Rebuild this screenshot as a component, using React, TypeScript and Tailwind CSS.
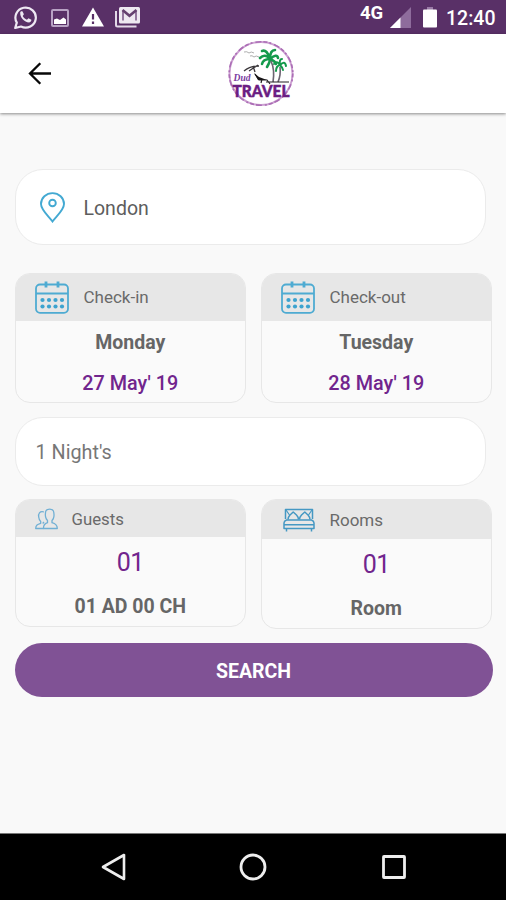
import React from "react";

function WhatsAppIcon() {
  return (
    <svg className="h-[26px] w-[25px]" viewBox="0 0 25 26" fill="none">
      <path d="M2.200 23 3.800 17.600A10.200 10 0 1 1 8 21.500Z" stroke="#eee8f3" strokeWidth="2.200" strokeLinejoin="round" />
      <path d="M7.200 7.400C7.500 6.400 8.300 6.100 9.400 6.300L10.900 9.200 9.700 11C10.700 12.800 12 14 13.900 14.800L15.500 13.300 18.400 14.700C18.400 16.200 17.600 17.100 16.200 17.400 11.500 17.500 6.700 12.300 7.200 7.400Z" fill="#eee8f3" />
    </svg>
  );
}

function PictureIcon() {
  return (
    <svg className="h-[18px] w-[18px]" viewBox="0 0 18 18" fill="none">
      <rect x="1" y="1" width="16" height="16" rx="1" stroke="#b8a2c4" strokeWidth="2" />
      <path d="M3 15V10.500L6 9.500 9 11 12.500 8.500 15 10.500V15Z" fill="#fff" />
    </svg>
  );
}

function WarningIcon() {
  return (
    <svg className="h-[20px] w-[22px]" viewBox="0 0 22 20">
      <path d="M11 0.500 22 19.500H0Z" fill="#fff" />
      <path d="M11 7V12.600M11 14.600V17" stroke="#593067" strokeWidth="2.200" />
    </svg>
  );
}

function MailIcon() {
  return (
    <svg className="h-[21px] w-[26px]" viewBox="0 0 26 21" fill="none">
      <path d="M1 4V18Q1 19.500 2.500 19.500H21.500" stroke="#e3d9e8" strokeWidth="2" />
      <rect x="4" y="0" width="21" height="16.500" rx="1.500" fill="#eee9f1" />
      <path d="M8 13.500V4M21 4V13.500" stroke="#8a6c96" strokeWidth="1.800" />
      <path d="M7.500 3 14.500 8.800 21.500 3" stroke="#65416f" strokeWidth="2.600" />
    </svg>
  );
}

function SignalIcon() {
  return (
    <svg className="h-[21px] w-[22px]" viewBox="0 0 22 21">
      <path d="M0 21 21 0V21Z" fill="#8e6c9c" />
      <path d="M0 21 10.500 10.500V21Z" fill="#fff" />
    </svg>
  );
}

function BatteryIcon() {
  return (
    <svg className="h-[21px] w-[14px]" viewBox="0 0 14 21">
      <rect x="4" y="0" width="6" height="3" fill="#9a7aa6" />
      <rect x="0" y="2.500" width="14" height="18" rx="1" fill="#fff" />
    </svg>
  );
}

function BackArrow() {
  return (
    <svg className="h-[23px] w-[24px]" viewBox="0 0 24 23" fill="none" stroke="#080808" strokeWidth="2.300">
      <path d="M23 11.500H2M12.300 1.200 2 11.500 12.300 21.800" />
    </svg>
  );
}

function Logo() {
  return (
    <svg className="h-[70px] w-[74px]" viewBox="0 0 74 70" fill="none">
      <circle cx="37" cy="34.500" r="31.500" stroke="#cda2d2" strokeWidth="2" />
      <circle cx="37" cy="34.500" r="31.800" stroke="#ab6db5" strokeWidth="1.600" strokeDasharray="4 2 2 3 6 2" />
      <path d="M20 13Q23 12 25 14Q27 12 30 14M26 17Q28 16 30 18Q32 16 35 18" stroke="#a5a5a5" strokeWidth="0.900" />
      <g stroke="#149a4b" strokeWidth="2.600" strokeLinecap="round">
        <path d="M46 20Q41 14 36 19M46 20Q43 10 38 12M46 20Q46 11 51 11M46 20Q53 14 54 19M46 20Q39 20 38 25M46 20Q46 23 43 28M46 20Q51 22 52 25" />
        <path d="M56 26Q53 21 50 25M56 26Q55 20 58 20M56 26Q61 21 62 27M56 26Q52 27 52 32M56 26Q59 29 59 31" strokeWidth="2" />
      </g>
      <path d="M47 22Q51 31 49 43M56 28Q57 36 54 43" stroke="#6b6370" strokeWidth="1.600" />
      <path d="M20 32Q26 27 35 27M25 32 34 26M29 27 31 33" stroke="#3a363a" strokeWidth="1.300" />
      <path d="M31 35 35 41 43 41 46 45M38 40 37 44M42 43H65" stroke="#242124" strokeWidth="1.200" />
      <path d="M30 34 34 41 43 41 35 38Z" fill="#171517" />
      <text x="9.500" y="42" fontFamily="Liberation Serif, serif" fontSize="10" fontStyle="italic" fontWeight="bold" textLength="17" lengthAdjust="spacingAndGlyphs" fill="#7a3ba0">Dud</text>
      <text x="8.500" y="58" fontFamily="Lato, sans-serif" fontSize="17" fontWeight="900" textLength="57" lengthAdjust="spacingAndGlyphs" fill="#6b1d82" stroke="#6b1d82" strokeWidth="0.500">TRAVEL</text>
    </svg>
  );
}

function PinIcon() {
  return (
    <svg className="h-[31px] w-[26px]" viewBox="0 0 26 31" fill="none" stroke="#43a9d2" strokeWidth="1.900">
      <path d="M12.500 29.500C8.500 24 1 18 1 12A11.500 10.900 0 0 1 24 12C24 18 16.500 24 12.500 29.500Z" />
      <circle cx="12.500" cy="11" r="3.300" />
    </svg>
  );
}

const DOT_COLUMNS = [7.5, 14, 20.5, 27];

function CalendarIcon() {
  return (
    <svg className="h-[33px] w-[34px]" viewBox="0 0 34 33" fill="none" stroke="#4eabd2" strokeWidth="1.800">
      <rect x="1" y="3.500" width="32" height="28.300" rx="4" />
      <path d="M1 12.500H33" />
      <path d="M11 0.500V6.500M23 0.500V6.500" strokeWidth="2.800" />
      {DOT_COLUMNS.map((x) => (
        <g key={x} fill="#3da3cf" stroke="none">
          <circle cx={x} cy="19" r="2.100" />
          <circle cx={x} cy="25.500" r="2.100" />
        </g>
      ))}
    </svg>
  );
}

function GuestsIcon() {
  return (
    <svg className="h-[22px] w-[23px]" viewBox="0 0 23 22" fill="none" stroke="#70afd4" strokeWidth="1.300" strokeLinejoin="round">
      <path d="M8.500 20.500H22.300C22.300 16.500 20 15.600 17 14.700V12.500C19 10.500 19.300 7.300 18.800 4.500 18.300 0 10.900 0 10.500 4.500 10.100 7.300 10.500 10.500 12.500 12.500V14.700C10 15.500 8.300 16.500 8.500 20.500Z" />
      <path d="M9 4C4.500 2.700 3.200 6 3.700 9 3.900 11 4.600 12.500 5.700 13.500V15.300C2.500 16.300 0.700 17 0.700 20.500H8.500M9 14 7.700 15.500" />
    </svg>
  );
}

function BedIcon() {
  return (
    <svg className="h-[24px] w-[32px]" viewBox="0 0 32 24" fill="none" stroke="#4598c3" strokeWidth="1.500" strokeLinejoin="round">
      <path d="M2.500 11V1.500H29.500V11M3.500 12H28.500Q31 13 31 15V20.500H1V15Q1 13 3.500 12ZM1 16.800H31M3.500 20.500V23.500M28.500 20.500V23.500" />
      <path d="M5 11.500Q5 9 7 7L10.200 4 13.500 7Q15.500 9 15.500 11.500M16.500 11.500Q16.500 9 18.500 7L21.800 4 25 7Q27 9 27 11.500" />
      <path d="M3 2 6.500 7M29 2 25.500 7" strokeWidth="1.200" />
    </svg>
  );
}

interface CardProps {
  icon: React.ReactNode;
  title: string;
  titleClass: string;
  frameClass: string;
  headClass: string;
  children: React.ReactNode;
}

function Card({ icon, title, titleClass, frameClass, headClass, children }: CardProps) {
  return (
    <section className={`w-[231.5px] overflow-hidden rounded-[15px] border-[1.5px] border-[#e7e7e7] bg-[#fafafa] ${frameClass}`}>
      <div className={`flex items-center bg-[#e7e7e7] pl-[19px] text-[#6a6a6a] ${headClass}`}>
        {icon}
        <span className={titleClass}>{title}</span>
      </div>
      <div className="flex flex-col items-center">{children}</div>
    </section>
  );
}

export default function App() {
  return (
    <div className="flex h-[900px] w-[506px] flex-col overflow-hidden bg-[#f9f9f9] font-['Roboto',sans-serif]">
      <div className="flex h-[34px] shrink-0 items-start bg-[#593067] text-white">
        <div className="flex pl-[13px] pt-[5px]"><WhatsAppIcon /></div>
        <div className="ml-[13px] mt-[9px]"><PictureIcon /></div>
        <div className="ml-[13px] mt-[7px]"><WarningIcon /></div>
        <div className="ml-[11px] mt-[7px]"><MailIcon /></div>
        <span className="ml-[219px] mt-[3px] w-[26px] whitespace-nowrap text-[18.500px] font-bold leading-5">4G</span>
        <div className="ml-[4px] mt-[7px]"><SignalIcon /></div>
        <div className="ml-[11px] mt-[7px]"><BatteryIcon /></div>
        <span className="ml-[9px] mt-[7px] whitespace-nowrap text-[19.5px] font-medium leading-6">12:40</span>
      </div>
      <header className="z-10 flex h-[79px] shrink-0 items-center bg-white pl-[28px] shadow-[0_1px_3px_rgba(0,0,0,0.45)]">
        <BackArrow />
        <div className="ml-[172px]"><Logo /></div>
      </header>
      <main className="flex flex-1 flex-col pl-[14.5px] pt-[56px]">
        <div className="flex h-[76px] w-[471px] items-center rounded-[28px] border-[1.5px] border-[#ebebeb] bg-white pl-[24px] text-[#5d5d5d]">
          <PinIcon />
          <span className="ml-[18px] mt-[3px] text-[19.5px]">London</span>
        </div>
        <div className="mt-[28px] flex gap-[14.5px]">
          <Card icon={<CalendarIcon />} title="Check-in" titleClass="ml-[15px] mt-px text-[17px]" frameClass="h-[130px]" headClass="h-[47px]">
            <strong className="mt-[8px] text-[19.5px] leading-7 text-[#666]">Monday</strong>
            <span className="mt-[13px] text-[19.800px] font-medium leading-7 text-[#71258d]">27 May' 19</span>
          </Card>
          <Card icon={<CalendarIcon />} title="Check-out" titleClass="ml-[15px] mt-px text-[17px]" frameClass="h-[130px]" headClass="h-[47px]">
            <strong className="mt-[8px] text-[19.5px] leading-7 text-[#666]">Tuesday</strong>
            <span className="mt-[13px] text-[19.800px] font-medium leading-7 text-[#71258d]">28 May' 19</span>
          </Card>
        </div>
        <div className="mt-[14px] flex h-[69px] w-[471px] items-center rounded-[28px] border-[1.5px] border-[#ebebeb] bg-white pl-[20px] pt-[2px] text-[19.800px] text-[#777]">1 Night's</div>
        <div className="mt-[13px] flex items-start gap-[14.5px]">
          <Card icon={<GuestsIcon />} title="Guests" titleClass="ml-[14px] mt-[3px] text-[16.800px]" frameClass="h-[127.5px]" headClass="h-[37px]">
            <span className="mt-[10px] text-[25px] leading-8 tracking-[-0.5px] text-[#71258d]">01</span>
            <strong className="mt-[14px] text-[19.5px] leading-7 text-[#666]">01 AD 00 CH</strong>
          </Card>
          <Card icon={<div className="ml-[2px]"><BedIcon /></div>} title="Rooms" titleClass="ml-[15px] mt-[2px] text-[17px]" frameClass="h-[129.5px]" headClass="h-[39px]">
            <span className="mt-[10px] text-[25px] leading-8 tracking-[-0.5px] text-[#71258d]">01</span>
            <strong className="mt-[14px] text-[19.5px] leading-7 text-[#666]">Room</strong>
          </Card>
        </div>
        <button className="mt-[14.5px] h-[54px] w-[478px] rounded-full bg-[#805295] pt-[3px] text-[19.5px] font-bold text-white">SEARCH</button>
      </main>
      <nav className="flex h-[67px] shrink-0 items-center border-t border-[#777] bg-black pl-[101px]">
        <svg className="h-[28px] w-[25px]" viewBox="0 0 25 28" fill="none" stroke="#eee" strokeWidth="2.600" strokeLinejoin="round"><path d="M2 14 23 2V26Z" /></svg>
        <svg className="ml-[113px] h-[28px] w-[28px]" viewBox="0 0 28 28" fill="none" stroke="#eee" strokeWidth="2.800"><circle cx="14" cy="14" r="12" /></svg>
        <svg className="ml-[115px] h-[24px] w-[24px]" viewBox="0 0 24 24" fill="none" stroke="#eee" strokeWidth="2.800"><rect x="1.500" y="1.500" width="21" height="21" rx="0.500" /></svg>
      </nav>
    </div>
  );
}
